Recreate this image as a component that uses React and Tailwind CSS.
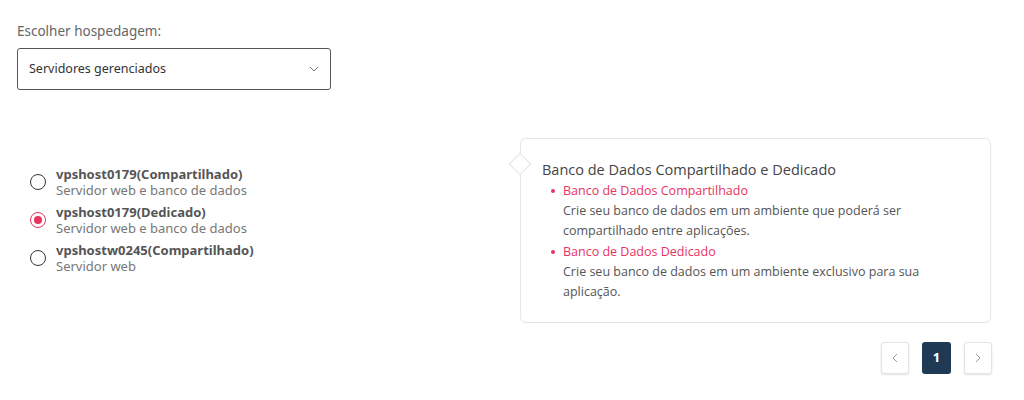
import React, { useState } from 'react';

const hosts = [
  { id: 'a', name: 'vpshost0179(Compartilhado)', desc: 'Servidor web e banco de dados' },
  { id: 'b', name: 'vpshost0179(Dedicado)', desc: 'Servidor web e banco de dados' },
  { id: 'c', name: 'vpshostw0245(Compartilhado)', desc: 'Servidor web' },
];

const App = () => {
  const [selected, setSelected] = useState('b');

  return (
    <div className="w-[1024px] h-[400px] bg-white pl-[17px] pr-[33px] pt-[22px] font-['Open_Sans',sans-serif]">
      <label className="block text-[13.5px] text-[#666] leading-[18px] font-['Noto_Sans',sans-serif]">Escolher hospedagem:</label>
      <button className="mt-[8px] w-[314px] h-[42px] border border-[#555] rounded-[3px] flex items-center justify-between pl-[11px] pr-[11px] text-[12.5px] text-[#333] font-['Noto_Sans',sans-serif]">
        <span>Servidores gerenciados</span>
        <svg width="10" height="6" viewBox="0 0 10 6" fill="none">
          <path d="M1 1l4 4 4-4" stroke="#777" strokeWidth="1" />
        </svg>
      </button>

      <div className="flex mt-[48px]">
        {/* Radios */}
        <div className="flex flex-col gap-[6px] pt-[28px] pl-[13px] font-['Noto_Sans',sans-serif]">
          {hosts.map((h) => (
            <button
              key={h.id}
              onClick={() => setSelected(h.id)}
              className="flex items-center gap-[10px] text-left"
            >
              <span
                className={`w-[16px] h-[16px] rounded-full border-[1.5px] flex items-center justify-center ${
                  selected === h.id ? 'border-[#e8335f]' : 'border-[#333]'
                }`}
              >
                {selected === h.id && <span className="w-[8px] h-[8px] rounded-full bg-[#e8335f]" />}
              </span>
              <span className="flex flex-col">
                <span className="text-[13px] font-bold text-[#555] leading-[16px]">{h.name}</span>
                <span className="text-[13px] text-[#777] leading-[16px]">{h.desc}</span>
              </span>
            </button>
          ))}
        </div>

        {/* Card */}
        <div className="ml-auto w-[471px] flex flex-col items-end">
          <div className="relative w-full border border-[#e6e6e6] rounded-[6px] pl-[21px] pr-[20px] pt-[21px] pb-[20px] shadow-[0_0_2px_rgba(0,0,0,0.04)]">
            <span className="absolute left-[-9px] top-[17px] w-[16px] h-[16px] bg-white border border-[#e3e3e3] rotate-45" />
            <h3 className="text-[14.5px] text-[#444] leading-[20px]">Banco de Dados Compartilhado e Dedicado</h3>
            <ul className="mt-[1px] text-[12.5px] leading-[20.2px]">
              <li className="flex">
                <span className="w-[21px] flex justify-center pt-[8px] shrink-0">
                  <span className="w-[4px] h-[4px] rounded-full bg-[#e8335f]" />
                </span>
                <div>
                  <div className="text-[#e8335f]">Banco de Dados Compartilhado</div>
                  <div className="text-[#555]">Crie seu banco de dados em um ambiente que poderá ser compartilhado entre aplicações.</div>
                </div>
              </li>
              <li className="flex">
                <span className="w-[21px] flex justify-center pt-[8px] shrink-0">
                  <span className="w-[4px] h-[4px] rounded-full bg-[#e8335f]" />
                </span>
                <div>
                  <div className="text-[#e8335f]">Banco de Dados Dedicado</div>
                  <div className="text-[#555]">Crie seu banco de dados em um ambiente exclusivo para sua aplicação.</div>
                </div>
              </li>
            </ul>
          </div>

          {/* Pagination */}
          <div className="flex gap-[13px] mt-[19px] mr-[-1px]">
            <button className="w-[28px] h-[32px] rounded-[3px] border border-[#e3e3e3] bg-white shadow-[0_1px_2px_rgba(0,0,0,0.12)] flex items-center justify-center">
              <svg width="6" height="10" viewBox="0 0 6 10" fill="none">
                <path d="M5 1L1 5l4 4" stroke="#999" strokeWidth="1" />
              </svg>
            </button>
            <button className="w-[29px] h-[32px] rounded-[3px] bg-[#1f3a55] text-white text-[13px] font-bold flex items-center justify-center">
              1
            </button>
            <button className="w-[28px] h-[32px] rounded-[3px] border border-[#e3e3e3] bg-white shadow-[0_1px_2px_rgba(0,0,0,0.12)] flex items-center justify-center">
              <svg width="6" height="10" viewBox="0 0 6 10" fill="none">
                <path d="M1 1l4 4-4 4" stroke="#999" strokeWidth="1" />
              </svg>
            </button>
          </div>
        </div>
      </div>
    </div>
  );
};

export default App;
